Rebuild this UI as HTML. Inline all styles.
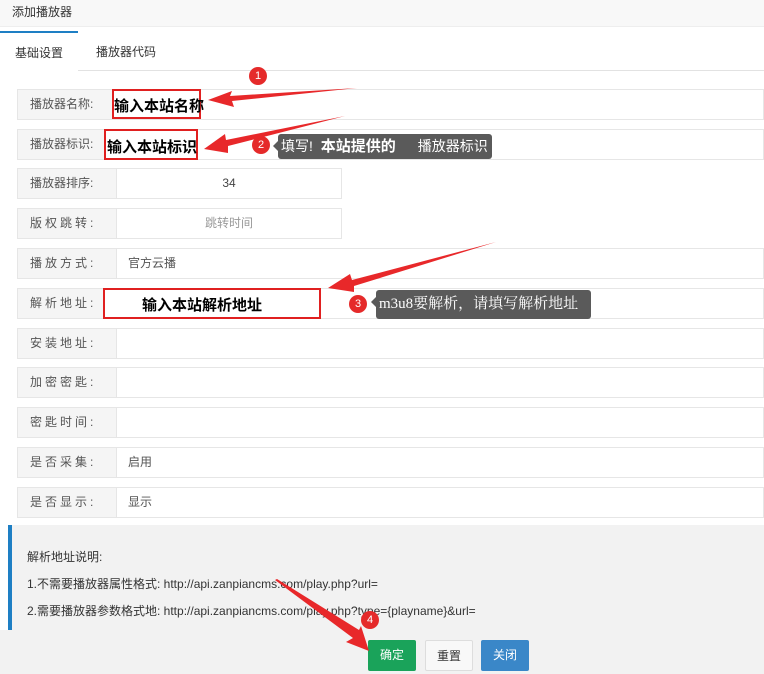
<!DOCTYPE html>
<html><head><meta charset="utf-8"><style>
*{box-sizing:border-box;margin:0;padding:0}
body{width:764px;height:674px;overflow:hidden;background:#fff;font-family:"Liberation Sans","Noto Sans CJK SC",sans-serif;font-size:12px;color:#333;position:relative}
.hd{position:absolute;left:0;top:0;width:764px;height:27px;background:#f8f8f8;border-bottom:1px solid #eee;padding:3px 12px;font-size:12px;color:#333}
.tabs{position:absolute;left:0;top:31px;width:764px;height:40px;border-bottom:1px solid #e2e2e2}
.tab{position:absolute;top:0;height:40px;line-height:42px;font-size:12px;color:#333}
.t1{left:0;width:78px;background:#fff;border-top:2px solid #1e7fc4;text-align:center;height:41px;line-height:40px}
.t2{left:96px}
.row{position:absolute;left:17px;right:0;height:31px;border:1px solid #e6e6e6}
.lab{position:absolute;left:0;top:0;width:99px;height:29px;background:#f5f5f5;border-right:1px solid #e6e6e6;line-height:29px;padding-left:12px;color:#555}
.val{position:absolute;left:110px;top:0;line-height:29px;color:#555}
.sp{letter-spacing:3px}
.info{position:absolute;left:8px;top:525px;width:756px;height:105px;background:#f2f2f2;border-left:4px solid #1e7fc4;padding:19px 0 0 15px;color:#333;font-size:12px;line-height:27px}
.foot{position:absolute;left:0;top:630px;width:764px;height:44px;background:#f2f2f2}
.btn{position:absolute;top:10px;height:31px;width:48px;line-height:31px;text-align:center;font-size:12px;border-radius:2px}
.red{position:absolute;border:2px solid #e02020}
.big{font-weight:bold;font-size:15px;color:#000;position:absolute}
.tip{position:absolute;background:#5a5a5a;color:#fff;border-radius:3px;font-size:14px;line-height:24px;padding-left:3px}
.tip:before{content:"";position:absolute;left:-5px;top:7px;border-right:5px solid #5a5a5a;border-top:5px solid transparent;border-bottom:5px solid transparent}
.c{position:absolute;width:18px;height:18px;border-radius:50%;background:#e52a2a;color:#fff;font-size:11px;text-align:center;line-height:18px}
</style></head><body>
<div class="hd">添加播放器</div>
<div class="tabs"><div class="tab t1">基础设置</div><div class="tab t2">播放器代码</div></div>

<div class="row" style="top:89px"><div class="lab">播放器名称:</div></div>
<div class="row" style="top:129px"><div class="lab">播放器标识:</div></div>
<div class="row" style="top:168px;right:422px"><div class="lab">播放器排序:</div><div class="val" style="left:99px;right:0;text-align:center;color:#444">34</div></div>
<div class="row" style="top:208px;right:422px"><div class="lab sp">版权跳转:</div><div class="val" style="left:99px;right:0;text-align:center;color:#999">跳转时间</div></div>
<div class="row" style="top:248px"><div class="lab sp">播放方式:</div><div class="val">官方云播</div></div>
<div class="row" style="top:288px"><div class="lab sp">解析地址:</div></div>
<div class="row" style="top:328px"><div class="lab sp">安装地址:</div></div>
<div class="row" style="top:367px"><div class="lab sp">加密密匙:</div></div>
<div class="row" style="top:407px"><div class="lab sp">密匙时间:</div></div>
<div class="row" style="top:447px"><div class="lab sp">是否采集:</div><div class="val">启用</div></div>
<div class="row" style="top:487px"><div class="lab sp">是否显示:</div><div class="val">显示</div></div>

<div class="info">解析地址说明:<br>1.不需要播放器属性格式: http://api.zanpiancms.com/play.php?url=<br>2.需要播放器参数格式地: http://api.zanpiancms.com/play.php?type={playname}&amp;url=</div>
<div class="foot">
<div class="btn" style="left:368px;background:#1aa35a;color:#fff">确定</div>
<div class="btn" style="left:425px;background:#f8f8f8;border:1px solid #ddd;color:#333">重置</div>
<div class="btn" style="left:481px;background:#3a87c8;color:#fff">关闭</div>
</div>

<div class="red" style="left:112px;top:89px;width:89px;height:30px;background:#fff"></div>
<div class="big" style="left:114px;top:95px">输入本站名称</div>
<div class="red" style="left:104px;top:129px;width:94px;height:31px;background:#fff"></div>
<div class="big" style="left:107px;top:136px">输入本站标识</div>
<div class="red" style="left:103px;top:288px;width:218px;height:31px;background:#fff"></div>
<div class="big" style="left:142px;top:294px">输入本站解析地址</div>

<div class="tip" style="left:278px;top:134px;width:214px;height:25px">填写! <b style="font-size:15px;margin-left:4px">本站提供的</b><span style="margin-left:22px">播放器标识</span></div>
<div class="tip" style="left:376px;top:290px;width:215px;height:29px;line-height:29px;font-family:'Liberation Serif','Noto Serif CJK SC',serif;font-size:15px">m3u8要解析，请填写解析地址</div>

<div class="c" style="left:249px;top:67px">1</div>
<div class="c" style="left:252px;top:136px">2</div>
<div class="c" style="left:349px;top:295px">3</div>
<div class="c" style="left:361px;top:611px">4</div>

<svg width="764" height="674" style="position:absolute;left:0;top:0">
<g fill="#e8282a">
<polygon points="357,88 230,96 232,91 208,100 234,107 232,101"/>
<polygon points="345,116 226,140 225,134 204,149 228,153 228,146"/>
<polygon points="496,242 352,280 350,274 328,288 354,292 354,286"/>
<polygon points="275,580 277,579 359,630 361,626 369,651 346,642 353,638"/>
</g>
</svg>
</body></html>
